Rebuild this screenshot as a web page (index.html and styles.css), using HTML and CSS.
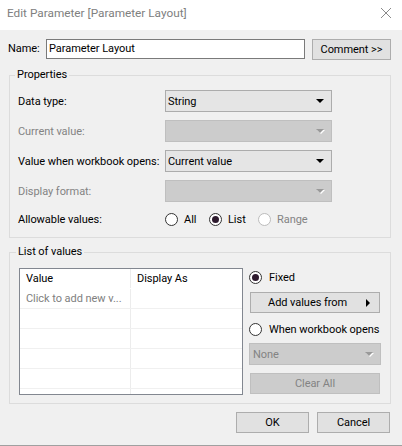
FILE: index.html
```html
<!DOCTYPE html>
<html>
<head>
<meta charset="utf-8">
<link rel="stylesheet" href="styles.css">
</head>
<body>
<div class="window">
  <div class="titlebar">
    <span class="title">Edit Parameter [Parameter Layout]</span>
    <svg class="close" width="12" height="12" viewBox="0 0 12 12"><path d="M1 1L11 11M11 1L1 11" stroke="#8a8a8a" stroke-width="1" fill="none"/></svg>
  </div>
  <div class="main">
    <div class="name-row">
      <span class="name-label">Name:</span>
      <div class="name-input">Parameter Layout</div>
      <div class="btn comment">Comment &gt;&gt;</div>
    </div>

    <fieldset class="group props">
      <legend>Properties</legend>
      <div class="prop-grid">
        <span>Data type:</span>
        <div class="select"><span>String</span><span class="arrow"></span></div>
        <span class="disabled-text">Current value:</span>
        <div class="select disabled"><span></span><span class="arrow"></span></div>
        <span>Value when workbook opens:</span>
        <div class="select"><span>Current value</span><span class="arrow"></span></div>
        <span class="disabled-text">Display format:</span>
        <div class="select disabled"><span></span><span class="arrow"></span></div>
        <span>Allowable values:</span>
        <div class="radios">
          <div class="radio-opt opt-all"><span class="radio"></span><span>All</span></div>
          <div class="radio-opt opt-list"><span class="radio checked"></span><span>List</span></div>
          <div class="radio-opt opt-range off"><span class="radio"></span><span>Range</span></div>
        </div>
      </div>
    </fieldset>

    <fieldset class="group values">
      <legend>List of values</legend>
      <div class="values-body">
        <div class="table">
          <div class="trow thead"><div class="cell">Value</div><div class="cell">Display As</div></div>
          <div class="trow"><div class="cell hint">Click to add new v...</div><div class="cell"></div></div>
          <div class="trow"><div class="cell"></div><div class="cell"></div></div>
          <div class="trow"><div class="cell"></div><div class="cell"></div></div>
          <div class="trow"><div class="cell"></div><div class="cell"></div></div>
          <div class="trow"><div class="cell"></div><div class="cell"></div></div>
          <div class="trow"><div class="cell"></div><div class="cell"></div></div>
        </div>
        <div class="side">
          <div class="radio-opt side-radio"><span class="radio checked"></span><span>Fixed</span></div>
          <div class="btn add-btn"><span>Add values from</span><span class="rarrow"></span></div>
          <div class="radio-opt side-radio when"><span class="radio"></span><span>When workbook opens</span></div>
          <div class="select disabled none-select"><span class="disabled-text">None</span><span class="arrow"></span></div>
          <div class="btn clear-btn">Clear All</div>
        </div>
      </div>
    </fieldset>

    <div class="footer">
      <div class="btn foot-btn">OK</div>
      <div class="btn foot-btn">Cancel</div>
    </div>
  </div>
  <div class="bottom-line"></div>
</div>
</body>
</html>
```
FILE: styles.css
```css
html, body {
  margin: 0;
  padding: 0;
}
body {
  width: 402px;
  height: 446px;
  overflow: hidden;
  background: #f0f0f0;
  font-family: Roboto, "Liberation Sans", sans-serif;
  font-size: 11px;
  letter-spacing: -0.05px;
  color: #000;
  white-space: nowrap;
}
.window {
  height: 446px;
  display: flex;
  flex-direction: column;
}
.titlebar {
  height: 30px;
  flex: none;
  background: #fff;
  display: flex;
  justify-content: space-between;
  align-items: flex-start;
  padding: 5px 10px 0 7px;
  box-sizing: border-box;
}
.title {
  color: #808080;
  line-height: 16px;
  font-size: 11.8px;
  letter-spacing: 0;
}
.close {
  margin-top: 2px;
}
.main {
  padding: 9px 11px 0 8px;
  display: flex;
  flex-direction: column;
}
.name-row {
  display: flex;
  align-items: flex-start;
  height: 21px;
}
.name-label {
  width: 38px;
  line-height: 20px;
}
.name-input {
  width: 259px;
  height: 20px;
  box-sizing: border-box;
  border: 1px solid #7a7a7a;
  background: #fff;
  padding-left: 2px;
  line-height: 18px;
}
.btn {
  background: #e1e1e1;
  border: 1px solid #adadad;
  height: 21px;
  box-sizing: border-box;
  display: flex;
  align-items: center;
  justify-content: center;
}
.comment {
  width: 79px;
  margin-left: 7px;
}
.group {
  margin: 0 0 0 1px;
  border: 1px solid #dcdcdc;
  min-width: 0;
}
.group legend {
  padding: 0 2px;
  margin-left: -3px;
  line-height: 16px;
}
.props {
  margin-top: 7px;
  padding: 7px 8px 9px 8px;
}
.prop-grid {
  display: grid;
  grid-template-columns: 147px 167px;
  grid-template-rows: 22px 22px 22px 22px 18px;
  row-gap: 8px;
  align-items: center;
}
.disabled-text {
  color: #838383;
}
.select {
  height: 22px;
  box-sizing: border-box;
  border: 1px solid #acacac;
  background: #e5e5e5;
  display: flex;
  align-items: center;
  justify-content: space-between;
  padding: 0 7px 0 2px;
}
.select.disabled {
  background: #cccccc;
  border-color: #bfbfbf;
}
.arrow {
  width: 0;
  height: 0;
  border-left: 4px solid transparent;
  border-right: 4px solid transparent;
  border-top: 4px solid #000;
}
.select.disabled .arrow {
  border-top-color: #9a9a9a;
  filter: drop-shadow(1px 1px 0 #ffffff);
}
.radios {
  display: flex;
  align-items: center;
}
.radio-opt {
  display: flex;
  align-items: center;
  gap: 6px;
  height: 18px;
}
.opt-all { width: 44px; }
.opt-list { width: 49px; }
.radio {
  width: 13px;
  height: 13px;
  box-sizing: border-box;
  border: 1px solid #333;
  border-radius: 50%;
  background: #fff;
  display: flex;
  align-items: center;
  justify-content: center;
  flex: none;
}
.radio.checked::after {
  content: "";
  width: 7px;
  height: 7px;
  border-radius: 50%;
  background: #2e1a2e;
}
.off {
  color: #838383;
}
.off .radio {
  border-color: #bcbcbc;
}
.values {
  margin-top: 6px;
  padding: 8px 9px 8px 9px;
}
.values-body {
  display: flex;
  gap: 6px;
  align-items: flex-start;
}
.table {
  width: 224px;
  height: 127px;
  box-sizing: border-box;
  border: 1px solid #828790;
  background: #fff;
  overflow: hidden;
  flex: none;
}
.trow {
  display: grid;
  grid-template-columns: 111px 1fr;
  height: 20px;
  box-sizing: border-box;
  border-bottom: 1px solid #f0f0f0;
}
.trow.thead {
  border-bottom-color: #fff;
}
.cell {
  padding-left: 6px;
  line-height: 19px;
  overflow: hidden;
}
.cell:first-child {
  border-right: 1px solid #ececec;
}
.hint {
  color: #808080;
}
.side {
  width: 132px;
  display: flex;
  flex-direction: column;
}
.side-radio {
  gap: 7px;
}
.add-btn {
  margin: 6px 0 0 1px;
  width: 130px;
  justify-content: space-between;
  padding: 0 9px 0 17px;
}
.rarrow {
  width: 0;
  height: 0;
  border-top: 4px solid transparent;
  border-bottom: 4px solid transparent;
  border-left: 4px solid #000;
}
.when {
  margin-top: 7px;
}
.none-select {
  margin-top: 5px;
  padding-left: 3px;
}
.clear-btn {
  margin: 8px 0 0 1px;
  width: 130px;
  background: #cccccc;
  border-color: #bfbfbf;
  color: #838383;
}
.footer {
  display: flex;
  justify-content: flex-end;
  gap: 8px;
  margin-top: 8px;
  padding-right: 1px;
}
.foot-btn {
  width: 73px;
}
.bottom-line {
  margin-top: auto;
  height: 1px;
  background: #a0a0a0;
  flex: none;
}
```
